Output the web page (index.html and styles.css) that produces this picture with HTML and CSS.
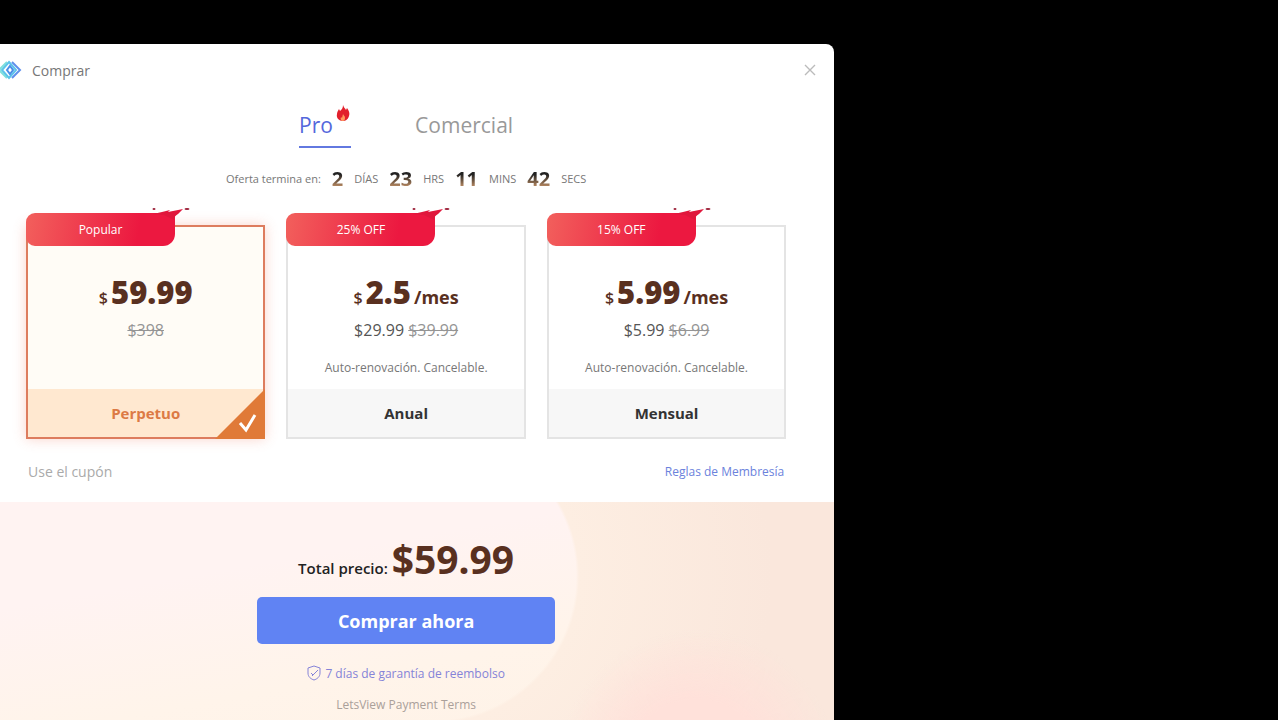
FILE: index.html
```html
<!DOCTYPE html>
<html lang="es">
<head>
  <meta charset="UTF-8" />
  <meta name="viewport" content="width=device-width, initial-scale=1.0" />
  <title>Comprar</title>
  <link rel="stylesheet" href="styles.css">
</head>
<body>
  <svg class="defs" width="0" height="0" aria-hidden="true">
    <symbol id="splash" viewBox="0 0 42 12">
      <path d="M1 6 L10 4 L18 2 L16 4 L31 1 L26 6 Q22 8 22 12 L12 7 Z" fill="#e0173c" />
      <ellipse cx="2" cy="1" rx="1.5" ry="1" fill="#9b2038" />
      <ellipse cx="35" cy="1" rx="2.5" ry="1" fill="#9b2038" />
    </symbol>
  </svg>

  <main class="dialog">
    <header class="title-bar">
      <svg class="logo" viewBox="0 0 24 20" fill="none" stroke-width="2">
        <path d="M9 2 L1 10 L9 18" stroke="#7fe0dc" />
        <path d="M11 2 L18 10 L11 18 L4 10 Z" stroke="#5cc4ea" />
        <path d="M12 6 L15 10 L12 14 L9 10 Z" stroke="#4a8fe8" />
        <path d="M14 2 L22 10 L14 18" stroke="#5f90ec" />
      </svg>
      <h1>Comprar</h1>
      <button class="close" aria-label="Cerrar">
        <svg viewBox="0 0 12 12"><path d="M1 1 L11 11 M11 1 L1 11" stroke="#bbb" stroke-width="1.4" /></svg>
      </button>
    </header>

    <nav class="tabs">
      <button class="tab active">Pro
        <svg class="flame" viewBox="0 0 14 16">
          <path d="M7 0 C8 3 9 3 10 5 L11 3 C13 6 14 8 13 11 C12 15 9 16 7 16 C3 16 0 13 1 9 C1 7 2 6 3 4 L4 6 C6 4 7 3 7 0 Z" fill="#e2202c" />
          <path d="M7 9 C8 11 9 11 9 13 C9 15 8 16 7 16 C5 16 4 14 5 12 L6 13 Z" fill="#ff9a5c" />
        </svg>
      </button>
      <button class="tab">Comercial</button>
    </nav>

    <div class="countdown">
      <span>Oferta termina en:</span>
      <b>2</b><span>DÍAS</span>
      <b>23</b><span>HRS</span>
      <b>11</b><span>MINS</span>
      <b>42</b><span>SECS</span>
    </div>

    <section class="plans">
      <label class="plan">
        <input type="radio" name="plan" checked />
        <span class="ribbon">Popular<svg class="splash"><use href="#splash" /></svg></span>
        <span class="price"><small>$</small><strong>59.99</strong></span>
        <span class="billed"><del>$398</del></span>
        <span class="note"></span>
        <span class="name">Perpetuo</span>
        <svg class="corner" viewBox="0 0 50 50">
          <path d="M50 0 V50 H0 Z" fill="#e07a38" />
          <path d="M25 34 L31 41 L40 26" fill="none" stroke="#fff" stroke-width="3" />
        </svg>
      </label>
      <label class="plan">
        <input type="radio" name="plan" />
        <span class="ribbon">25% OFF<svg class="splash"><use href="#splash" /></svg></span>
        <span class="price"><small>$</small><strong>2.5</strong><em>/mes</em></span>
        <span class="billed">$29.99 <del>$39.99</del></span>
        <span class="note">Auto-renovación. Cancelable.</span>
        <span class="name">Anual</span>
      </label>
      <label class="plan">
        <input type="radio" name="plan" />
        <span class="ribbon">15% OFF<svg class="splash"><use href="#splash" /></svg></span>
        <span class="price"><small>$</small><strong>5.99</strong><em>/mes</em></span>
        <span class="billed">$5.99 <del>$6.99</del></span>
        <span class="note">Auto-renovación. Cancelable.</span>
        <span class="name">Mensual</span>
      </label>
    </section>

    <div class="extras">
      <button class="coupon">Use el cupón</button>
      <a href="#reglas">Reglas de Membresía</a>
    </div>

    <footer class="checkout">
      <p class="total">Total precio: <strong>$59.99</strong></p>
      <button class="buy">Comprar ahora</button>
      <a class="guarantee" href="#garantia">
        <svg viewBox="0 0 14 16" fill="none" stroke="#8583d8">
          <path d="M7 1 L13 3 V8 C13 12 10 14 7 15 C4 14 1 12 1 8 V3 Z" />
          <path d="M4 8 L6 10 L10 6 M5 11 L11 5" />
        </svg>
        7 días de garantía de reembolso
      </a>
      <a class="terms" href="#terms">LetsView Payment Terms</a>
    </footer>
  </main>
</body>
</html>
```
FILE: styles.css
```css
* {
  box-sizing: border-box;
}
body {
  margin: 0;
  min-height: 100vh;
  background: #000;
  color: #555;
  font-family: 'Segoe UI', 'Open Sans', sans-serif;
  overflow: hidden;
}
button {
  font-family: inherit;
  background: none;
  border: none;
  padding: 0;
  cursor: pointer;
}
a {
  text-decoration: none;
}
.defs {
  position: absolute;
}

/* the window hangs a little over the left edge of the screen */
.dialog {
  width: 67%;
  min-height: calc(100vh - 44px);
  margin: 44px 0 0 -22px;
  background: #fff;
  border-radius: 8px 8px 0 0;
  display: flex;
  flex-direction: column;
  overflow: hidden;
}
.title-bar {
  display: flex;
  align-items: center;
  height: 52px;
  padding: 0 18px 0 20px;
}
.logo {
  width: 24px;
  height: 20px;
}
.title-bar h1 {
  margin: 0 auto 0 10px;
  font-size: 14px;
  font-weight: 400;
  color: #777;
}
.close {
  width: 12px;
  height: 12px;
  display: flex;
}

.tabs {
  display: flex;
  justify-content: center;
  gap: 64px;
  height: 52px;
}
.tab {
  position: relative;
  height: 52px;
  font-size: 21px;
  line-height: 28px;
  color: #999;
  padding-top: 5px;
}
.tab.active {
  width: 52px;
  text-align: left;
  color: #5468dc;
}
.tab.active::after {
  content: "";
  position: absolute;
  left: 0;
  right: 0;
  bottom: 0;
  height: 2px;
  background: #6278e0;
}
.flame {
  position: absolute;
  top: 9px;
  right: 1px;
  width: 14px;
  height: 16px;
}

.countdown {
  display: flex;
  justify-content: center;
  align-items: center;
  gap: 11px;
  height: 30px;
  margin-top: 15px;
  font-size: 11px;
  color: #777;
}
.countdown b {
  font-size: 20px;
  font-weight: 700;
  background: linear-gradient(#222 35%, #b98a62 80%);
  background-clip: text;
  -webkit-background-clip: text;
  color: transparent;
}

.plans {
  display: grid;
  grid-template-columns: repeat(3, 1fr);
  gap: 21px;
  padding: 0 48px;
  margin-top: 32px;
}
.plan {
  position: relative;
  display: flex;
  flex-direction: column;
  align-items: center;
  height: 214px;
  padding-top: 44px;
  border: 2px solid #e4e4e4;
  cursor: pointer;
}
.plan input {
  position: absolute;
  opacity: 0;
}
.plan:has(:checked) {
  background: #fffcf6;
  border-color: #dd7c5e;
  box-shadow: 0 0 12px rgba(240, 110, 80, 0.3);
}
.ribbon {
  position: absolute;
  top: -14px;
  left: -2px;
  width: 149px;
  height: 33px;
  border-radius: 9px 0 12px 9px;
  background: linear-gradient(100deg, #f2605c, #ec1840 75%);
  color: #fff;
  font-size: 12px;
  line-height: 33px;
  text-align: center;
}
.splash {
  position: absolute;
  top: -5px;
  right: -19px;
  width: 42px;
  height: 12px;
}
.price {
  display: flex;
  align-items: baseline;
  gap: 3px;
  height: 43px;
  line-height: 42px;
  font-weight: 700;
  color: #59301f;
}
.price small {
  font-size: 16px;
  font-weight: 600;
}
.price strong {
  font-family: 'Segoe UI', 'Noto Sans', sans-serif;
  font-size: 31px;
}
.price em {
  font-size: 18px;
  font-style: normal;
}
.billed {
  height: 32px;
  font-size: 16px;
  line-height: 32px;
  color: #555;
}
.billed del {
  color: #949494;
}
.note {
  height: 43px;
  font-size: 12px;
  line-height: 44px;
  color: #777;
}
.name {
  flex: 1;
  align-self: stretch;
  display: flex;
  align-items: center;
  justify-content: center;
  background: #f7f7f7;
  color: #333;
  font-size: 15px;
  font-weight: 700;
}
.plan:has(:checked) .name {
  background: #ffe8d0;
  color: #dc7a45;
}
.corner {
  position: absolute;
  right: -2px;
  bottom: -2px;
  width: 50px;
  height: 50px;
}

.extras {
  display: flex;
  justify-content: space-between;
  align-items: center;
  height: 63px;
  padding: 2px 50px 0;
}
.coupon {
  font-size: 14px;
  color: #aaa;
}
.extras a {
  font-size: 12px;
  color: #6b82dc;
}

.checkout {
  flex: 1;
  display: flex;
  flex-direction: column;
  align-items: center;
  padding: 28px 48px 0;
  background:
    radial-gradient(circle at 84% 122%, #ffe1da 0 70px, transparent 140px),
    radial-gradient(circle at 0 34%, transparent 144px, #fdeee2 147px, #fae7dc 340px) right / 47% 100% no-repeat,
    linear-gradient(170deg, #fff3f2 30%, #fff4ea 65%, #fef2e6);
}
.total {
  margin: 0;
  height: 58px;
  font-size: 15px;
  font-weight: 600;
  line-height: 58px;
  color: #222;
}
.total strong {
  font-family: 'Segoe UI', 'Noto Sans', sans-serif;
  font-size: 39px;
  font-weight: 700;
  color: #59301f;
}
.buy {
  width: 298px;
  height: 47px;
  margin-top: 9px;
  border-radius: 5px;
  background: #6083f3;
  color: #fff;
  font-size: 18px;
  font-weight: 700;
}
.guarantee {
  display: flex;
  align-items: center;
  gap: 4px;
  height: 32px;
  margin-top: 13px;
  font-size: 12px;
  color: #8583d8;
}
.guarantee svg {
  width: 14px;
  height: 16px;
}
.terms {
  height: 32px;
  font-size: 12px;
  line-height: 32px;
  color: #aaa09a;
}
```
